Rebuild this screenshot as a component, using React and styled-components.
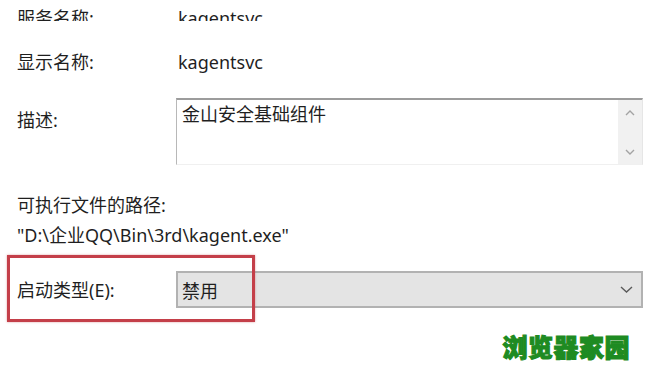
import React from "react";
import styled, { createGlobalStyle } from "styled-components";

const GlobalStyle = createGlobalStyle`
  html, body {
    margin: 0;
    padding: 0;
    background: #ffffff;
  }
  body {
    font-family: "Noto Sans", "Noto Sans CJK SC", sans-serif;
    color: #1f1f1f;
  }
`;

const Page = styled.div`
  width: 648px;
  height: 370px;
  overflow: hidden;
  padding: 0 5px 0 17px;
  box-sizing: border-box;
  font-size: 18px;
`;

const Row = styled.div`
  display: grid;
  grid-template-columns: 159px 1fr;
  align-items: ${(p) => p.$align || "center"};
  height: ${(p) => p.$height}px;
  margin-top: ${(p) => p.$gap || 0}px;
`;

// first row is cut by the top of the picture, only its lower part shows
const ClippedRow = styled(Row)`
  overflow: hidden;
  align-items: end;
  line-height: 18px;
`;

const Label = styled.div`
  line-height: 24px;
  margin-top: ${(p) => p.$offset || 0}px;
  white-space: nowrap;
`;

const Value = styled.div`
  padding-left: 2px;
  line-height: ${(p) => p.$lh || 24}px;
  white-space: nowrap;
`;

const Block = styled.div`
  margin-top: ${(p) => p.$gap}px;
  line-height: 30px;
  white-space: nowrap;
`;

const TextBox = styled.div`
  display: flex;
  height: 67px;
  box-sizing: border-box;
  border-top: 2px solid #9c9c9c;
  border-left: 1px solid #b8b8b8;
  border-right: 1px solid #e6e6e6;
  border-bottom: 1px solid #f0f0f0;
  background: #fff;
`;

const TextArea = styled.div`
  flex: 1;
  padding: 3px 5px;
  line-height: 22px;
`;

const ScrollBar = styled.div`
  width: 24px;
  background: #f1f1f1;
  display: flex;
  flex-direction: column;
  justify-content: space-between;
  align-items: center;
  padding: 10px 0 9px;
  box-sizing: border-box;
`;

const HighlightRow = styled(Row)`
  position: relative;
`;

const Highlight = styled.div`
  position: absolute;
  left: -10px;
  top: -16px;
  width: 248px;
  height: 67px;
  box-sizing: border-box;
  border: 3px solid #c43f49;
  box-shadow: 0 0 2px rgba(196, 63, 73, 0.5);
  pointer-events: none;
`;

const Select = styled.div`
  height: 37px;
  box-sizing: border-box;
  background: #e4e4e4;
  border: 2px solid #b2b2b2;
  display: flex;
  align-items: center;
  justify-content: space-between;
  padding: 0 8px 0 4px;
`;

const Watermark = styled.div`
  margin-top: 25px;
  display: flex;
  justify-content: flex-end;
  padding-right: 13px;
`;

const Brand = styled.span`
  font-family: "Noto Sans CJK SC", sans-serif;
  font-weight: 900;
  font-size: 25px;
  line-height: 26px;
  letter-spacing: 0.5px;
  color: #1e8b22;
  -webkit-text-stroke: 1.1px #1e8b22;
`;

const Chevron = ({ up, color = "#a3a3a3", w = 10, h = 6 }) => (
  <svg width={w} height={h} viewBox={`0 0 ${w} ${h}`}>
    <polyline
      points={up ? `1,${h - 1} ${w / 2},1 ${w - 1},${h - 1}` : `1,1 ${w / 2},${h - 1} ${w - 1},1`}
      fill="none"
      stroke={color}
      strokeWidth="1.4"
    />
  </svg>
);

const App = () => (
  <>
    <GlobalStyle />
    <Page>
      <ClippedRow $height={12} $gap={9}>
        <div>服务名称:</div>
        <Value $lh={18}>kagentsvc</Value>
      </ClippedRow>

      <Row $height={30} $gap={26}>
        <Label>显示名称:</Label>
        <Value>kagentsvc</Value>
      </Row>

      <Row $height={67} $gap={21} $align="start">
        <Label $offset={10}>描述:</Label>
        <TextBox>
          <TextArea>金山安全基础组件</TextArea>
          <ScrollBar>
            <Chevron up />
            <Chevron />
          </ScrollBar>
        </TextBox>
      </Row>

      <Block $gap={25}>
        <div>可执行文件的路径:</div>
        <div>"D:\企业QQ\Bin\3rd\kagent.exe"</div>
      </Block>

      <HighlightRow $height={37} $gap={21}>
        <Label>启动类型(E):</Label>
        <Select>
          <span>禁用</span>
          <Chevron color="#5a5a5a" w={13} h={7} />
        </Select>
        <Highlight />
      </HighlightRow>

      <Watermark>
        <Brand>浏览器家园</Brand>
      </Watermark>
    </Page>
  </>
);

export default App;
